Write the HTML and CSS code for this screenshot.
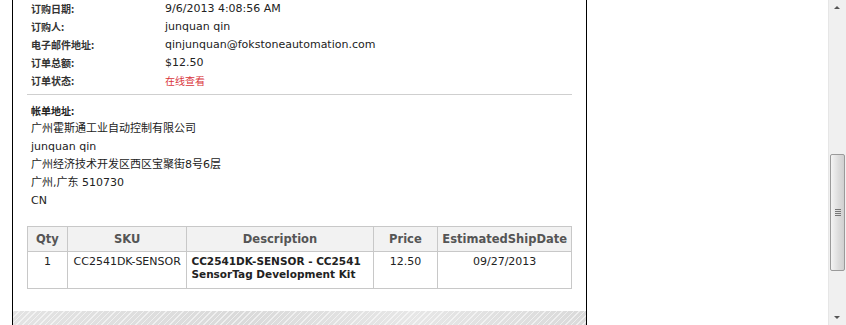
FILE: index.html
```html
<!DOCTYPE html>
<html lang="zh-CN">

<head>
    <meta charset="UTF-8">
    <title>订单详情</title>
    <link rel="stylesheet" href="styles.css">
</head>

<body>
    <div class="window">
        <div class="page">
            <div class="order-box">
                <div class="content">
                    <!-- order summary -->
                    <div class="info-row"><span class="label">订购日期:</span><span class="value">9/6/2013 4:08:56 AM</span></div>
                    <div class="info-row"><span class="label">订购人:</span><span class="value">junquan qin</span></div>
                    <div class="info-row"><span class="label">电子邮件地址:</span><span class="value">qinjunquan@fokstoneautomation.com</span></div>
                    <div class="info-row"><span class="label">订单总额:</span><span class="value">$12.50</span></div>
                    <div class="info-row"><span class="label">订单状态:</span><span class="value status">在线查看</span></div>

                    <div class="divider"></div>

                    <!-- billing address -->
                    <div class="address">
                        <div class="address-title">帐单地址:</div>
                        <div>广州霍斯通工业自动控制有限公司</div>
                        <div>junquan qin</div>
                        <div>广州经济技术开发区西区宝聚街8号6层</div>
                        <div>广州,广东 510730</div>
                        <div>CN</div>
                    </div>

                    <table class="items">
                        <thead>
                            <tr>
                                <th class="col-qty">Qty</th>
                                <th class="col-sku">SKU</th>
                                <th class="col-desc">Description</th>
                                <th class="col-price">Price</th>
                                <th class="col-date">EstimatedShipDate</th>
                            </tr>
                        </thead>
                        <tbody>
                            <tr>
                                <td>1</td>
                                <td>CC2541DK-SENSOR</td>
                                <td class="desc">CC2541DK-SENSOR - CC2541 SensorTag Development Kit</td>
                                <td>12.50</td>
                                <td>09/27/2013</td>
                            </tr>
                        </tbody>
                    </table>
                </div>
                <div class="footer-band"></div>
            </div>
        </div>

        <!-- fake browser scrollbar -->
        <div class="scrollbar">
            <div class="arrow up"></div>
            <div class="track">
                <div class="thumb"><span class="grip"></span></div>
            </div>
            <div class="arrow down"></div>
        </div>
    </div>
</body>

</html>
```

FILE: styles.css
```css
html,
body {
    margin: 0;
    padding: 0;
    height: 100%;
    overflow: hidden;
    background-color: white;
}

body {
    font-family: 'DejaVu Sans', Verdana, 'Noto Sans CJK SC', sans-serif;
    font-size: 11px;
    color: #222;
}

.window {
    display: flex;
    height: 325px;
}

.page {
    flex: 1;
    overflow: hidden;
}

.order-box {
    margin-left: 12px;
    width: 573px;
    height: 325px;
    border-left: 1px solid black;
    border-right: 1px solid black;
    display: flex;
    flex-direction: column;
}

.content {
    flex: 1;
    padding: 0 14px;
}

.info-row {
    display: flex;
    height: 18px;
    line-height: 17px;
    padding-left: 4px;
}

.label {
    width: 134px;
    font-family: 'Noto Sans CJK SC', sans-serif;
    font-weight: bold;
    font-size: 10px;
    color: #333;
}

.value {
    color: #222;
}

.status {
    font-family: 'Noto Sans CJK SC', sans-serif;
    font-size: 10px;
    color: #d9343a;
}

.divider {
    height: 1px;
    margin: 4px 0 7px 0;
    background-color: #cfcfcf;
}

.address {
    padding-left: 4px;
    line-height: 18px;
    font-family: 'DejaVu Sans', 'Noto Sans CJK SC', sans-serif;
}

.address div {
    height: 18px;
}

.address-title {
    font-family: 'Noto Sans CJK SC', sans-serif;
    font-weight: bold;
    font-size: 10px;
}

.items {
    margin-top: 16px;
    width: 545px;
    border-collapse: collapse;
    border: 1px solid #c8c8c8;
}

.items th,
.items td {
    border: 1px solid #c8c8c8;
    text-align: center;
    padding: 0 4px;
}

.items th {
    height: 24px;
    background-color: #f2f2f2;
    color: #555;
    font-size: 11.5px;
    font-weight: bold;
}

.items td {
    height: 33px;
    vertical-align: top;
    padding-top: 3px;
    line-height: 13px;
}

.items td.desc {
    text-align: left;
    font-weight: bold;
    font-size: 10.5px;
    color: #222;
}

.col-qty {
    width: 31px;
}

.col-sku {
    width: 111px;
}

.col-desc {
    width: 178px;
}

.col-price {
    width: 56px;
}

.footer-band {
    height: 14px;
    background-color: #dadada;
    background-image:
        repeating-linear-gradient(135deg, rgba(255, 255, 255, 0.55) 0 1px, transparent 1px 4px),
        linear-gradient(90deg, rgba(255, 255, 255, 0.25), rgba(255, 255, 255, 0) 40%, rgba(255, 255, 255, 0.35) 70%, rgba(255, 255, 255, 0));
}

.scrollbar {
    width: 17px;
    display: flex;
    flex-direction: column;
    background-color: #f0f0f0;
    border-left: 1px solid #e6e6e6;
}

.arrow {
    height: 17px;
    position: relative;
}

.arrow::before {
    content: '';
    position: absolute;
    left: 5px;
    width: 0;
    height: 0;
    border-style: solid;
}

.arrow.up::before {
    top: 6px;
    border-width: 0 3px 3px 3px;
    border-color: transparent transparent #555 transparent;
}

.arrow.down::before {
    top: 8px;
    border-width: 3px 3px 0 3px;
    border-color: #555 transparent transparent transparent;
}

.track {
    flex: 1;
    padding-top: 137px;
}

.thumb {
    height: 115px;
    margin: 0 1px;
    border: 1px solid #9a9a9a;
    border-radius: 2px;
    background: linear-gradient(90deg, #f4f4f4, #dcdcdc 60%, #d0d0d0);
    display: flex;
    align-items: center;
    justify-content: center;
}

.grip {
    width: 6px;
    height: 7px;
    background: repeating-linear-gradient(180deg, #777 0 1px, transparent 1px 2px);
}
```
